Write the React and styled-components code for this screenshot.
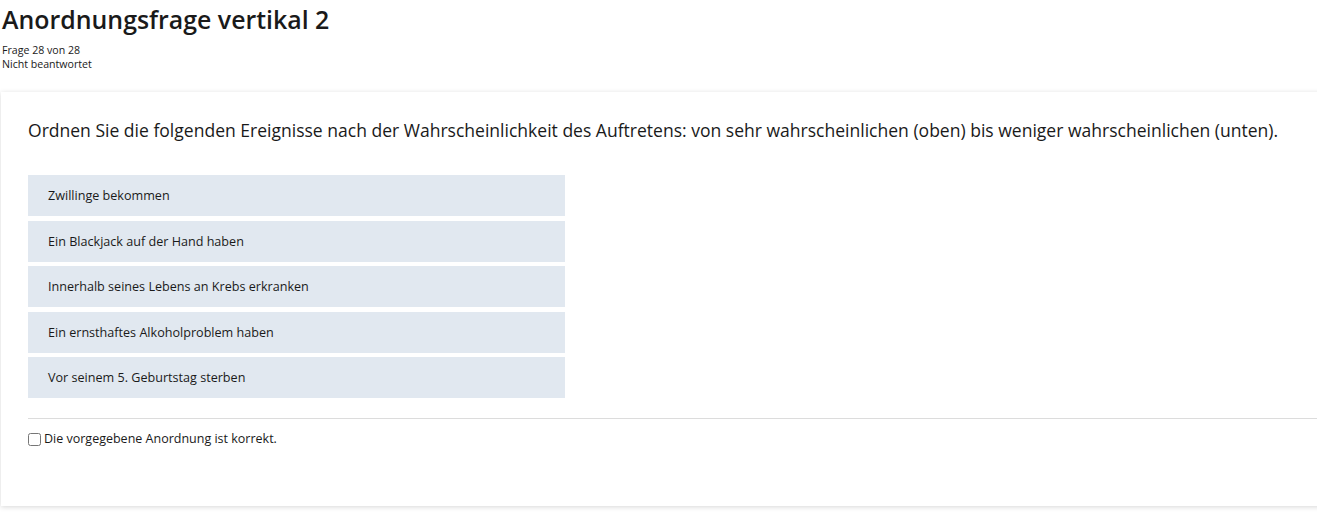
import React from 'react'
import styled, { createGlobalStyle } from 'styled-components'

const GlobalStyle = createGlobalStyle`
  html, body {
    margin: 0;
    padding: 0;
    background: #ffffff;
    overflow: hidden;
  }
  body {
    font-family: "Open Sans", "Noto Sans", sans-serif;
    color: #1a1a1a;
  }
`

const items = [
  { id: 1, text: 'Zwillinge bekommen' },
  { id: 2, text: 'Ein Blackjack auf der Hand haben' },
  { id: 3, text: 'Innerhalb seines Lebens an Krebs erkranken' },
  { id: 4, text: 'Ein ernsthaftes Alkoholproblem haben' },
  { id: 5, text: 'Vor seinem 5. Geburtstag sterben' },
]

function App() {
  return (
    <Page>
      <GlobalStyle />
      <Header>
        <Title>Anordnungsfrage vertikal 2</Title>
        <Meta>
          <div>Frage 28 von 28</div>
          <div>Nicht beantwortet</div>
        </Meta>
      </Header>
      <Card>
        <Question>
          Ordnen Sie die folgenden Ereignisse nach der Wahrscheinlichkeit des Auftretens: von sehr
          wahrscheinlichen (oben) bis weniger wahrscheinlichen (unten).
        </Question>
        <OrderList>
          {items.map((item) => (
            <OrderItem key={item.id}>{item.text}</OrderItem>
          ))}
        </OrderList>
        <Divider />
        <CheckRow>
          <Checkbox type="checkbox" />
          Die vorgegebene Anordnung ist korrekt.
        </CheckRow>
      </Card>
    </Page>
  )
}

const Page = styled.div`
  width: 100%;
  min-height: 518px;
`

const Header = styled.div`
  padding: 3px 0 0 2px;
`

const Title = styled.h1`
  margin: 0;
  font-size: 24.9px;
  font-weight: 600;
  line-height: 32px;
  color: #1a1a1a;
`

const Meta = styled.div`
  margin-top: 8px;
  font-size: 10.6px;
  line-height: 14px;
  color: #1a1a1a;
`

const Card = styled.div`
  margin: 21px -20px 0 1px;
  padding: 26px 0 59px 27px;
  background: #ffffff;
  box-shadow: 0 1px 5px rgba(0, 0, 0, 0.16);
`

const Question = styled.p`
  margin: 0 0 33px;
  font-size: 17.55px;
  line-height: 24px;
  color: #1a1a1a;
  white-space: nowrap;
`

const OrderList = styled.div`
  display: flex;
  flex-direction: column;
  gap: 4.6px;
  width: 537px;
`

const OrderItem = styled.div`
  height: 41px;
  display: flex;
  align-items: center;
  padding-left: 20px;
  background: #e1e8f0;
  font-size: 12.6px;
  color: #1a1a1a;
`

const Divider = styled.hr`
  margin: 20px 0 0;
  border: 0;
  border-top: 1px solid #dcdcdc;
`

const CheckRow = styled.label`
  display: flex;
  align-items: center;
  gap: 3px;
  margin-top: 12px;
  font-size: 12.5px;
  line-height: 16px;
  color: #1a1a1a;
`

const Checkbox = styled.input`
  margin: 0;
  width: 13px;
  height: 13px;
`

export default App
